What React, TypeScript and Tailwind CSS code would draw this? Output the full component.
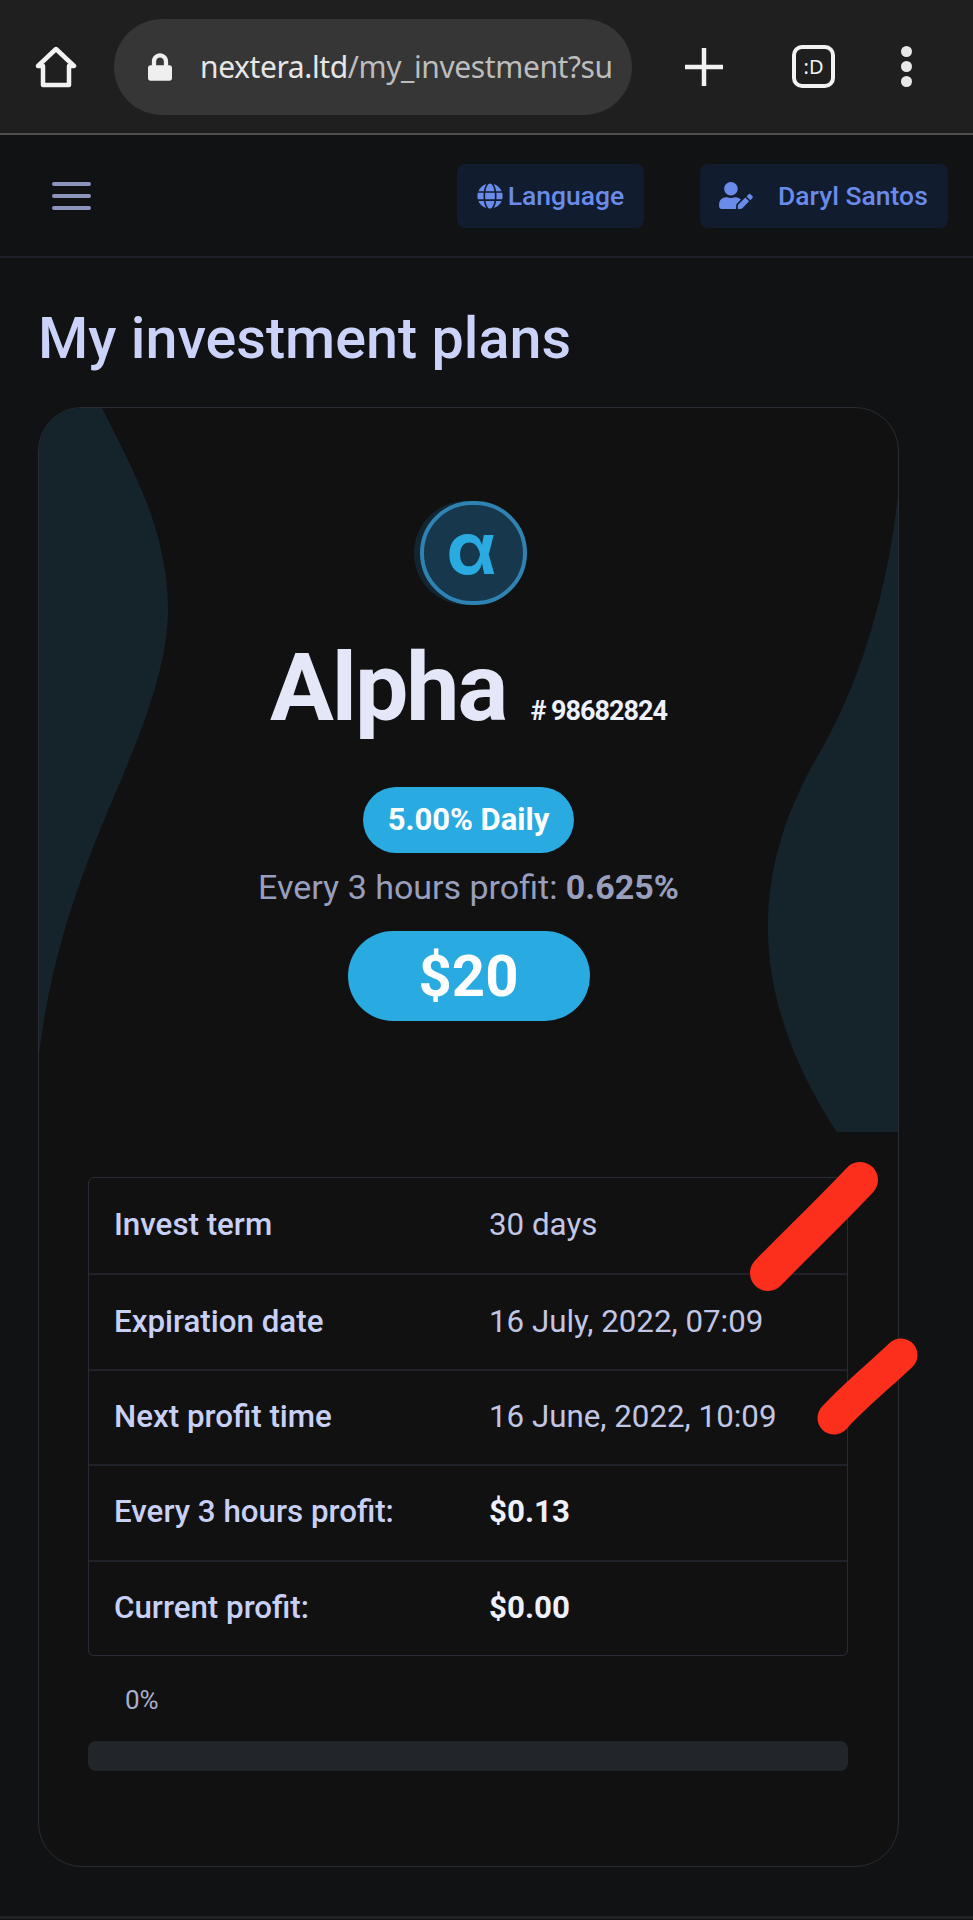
import { FaGlobe, FaUserEdit, FaLock } from 'react-icons/fa';

const rows = [
    { label: 'Invest term', value: '30 days' },
    { label: 'Expiration date', value: '16 July, 2022, 07:09' },
    { label: 'Next profit time', value: '16 June, 2022, 10:09' },
    { label: 'Every 3 hours profit:', value: '$0.13', strong: true },
    { label: 'Current profit:', value: '$0.00', strong: true },
];

const BrowserBar = () => (
    <div className="h-[135px] flex items-center bg-[#1f1f1f] border-b-2 border-[#4f4f4f]">
        <svg className="ml-[35px] w-[42px] h-[42px]" viewBox="0 0 42 42" fill="none" stroke="#f2f2f2" strokeWidth="4.5" strokeLinejoin="round">
            <path d="M21 3 L39 20 H34 V39 H8 V20 H3 Z" />
        </svg>
        <div className="ml-[37px] w-[518px] h-[96px] rounded-[48px] bg-[#363636] flex items-center pl-[34px] overflow-hidden">
            <FaLock className="text-[#efefef] w-[24px] h-[28px] shrink-0" />
            <div className="ml-[28px] w-[414px] overflow-hidden whitespace-nowrap font-['Noto_Sans',sans-serif] text-[30px] tracking-[-0.4px] text-[#bdbdbd]">
                <span className="text-[#e6e6e6]">nextera.ltd</span>/my_investment?su
            </div>
        </div>
        <svg className="ml-[52px] w-[40px] h-[40px]" viewBox="0 0 40 40" stroke="#f2f2f2" strokeWidth="4.5">
            <path d="M20 1 V39 M1 20 H39" />
        </svg>
        <div className="ml-[68px] w-[43px] h-[43px] rounded-[10px] border-[4px] border-[#f2f2f2] flex items-center justify-center font-['Noto_Sans',sans-serif] text-[20px] text-[#f2f2f2]">
            :D
        </div>
        <div className="ml-[66px] flex flex-col gap-[4px]">
            <div className="w-[11px] h-[11px] rounded-full bg-[#e8e8e8]" />
            <div className="w-[11px] h-[11px] rounded-full bg-[#e8e8e8]" />
            <div className="w-[11px] h-[11px] rounded-full bg-[#e8e8e8]" />
        </div>
    </div>
);

const NavBar = () => (
    <div className="h-[123px] flex items-center border-b-2 border-[#1e2029] pl-[52px] pr-[25px]">
        <div className="flex flex-col gap-[8px]">
            <div className="w-[39px] h-[4px] rounded-sm bg-[#8c95b8]" />
            <div className="w-[39px] h-[4px] rounded-sm bg-[#8c95b8]" />
            <div className="w-[39px] h-[4px] rounded-sm bg-[#8c95b8]" />
        </div>
        <div className="ml-auto w-[187px] h-[64px] rounded-lg bg-[#111c2e] flex items-center justify-center gap-[5px] text-[26.5px] font-medium text-[#6a8bea]">
            <FaGlobe className="w-[26px] h-[26px]" />
            Language
        </div>
        <div className="ml-[56px] w-[248px] h-[64px] rounded-lg bg-[#111c2e] flex items-center pl-[19px] text-[26.5px] font-medium text-[#6a8bea]">
            <FaUserEdit className="w-[34px] h-[27px]" />
            <span className="ml-[25px]">Daryl Santos</span>
        </div>
    </div>
);

const App = () => {
    return (
        <div className="relative w-[973px] h-[1920px] overflow-hidden bg-[#111214] font-['Roboto',sans-serif]">
            <BrowserBar />
            <NavBar />

            <main className="pl-[38px]">
                <h1 className="mt-[48px] text-[57.5px] leading-[66px] font-medium text-[#ccd3fa]">My investment plans</h1>

                {/* Plan card */}
                <div className="relative mt-[35px] w-[861px] h-[1460px] rounded-[44px] border border-[#2a2c35] overflow-hidden bg-[#111112]">
                    <svg className="absolute left-0 top-0 w-[860px] h-[1460px]" viewBox="0 0 860 1460" fill="#15242b">
                        <path d="M0 0 H63 C90 55 129 120 129 201 C129 280 80 370 50 450 C25 515 8 580 0 646 Z" />
                        <path d="M860 75 C850 190 815 290 774 356 C745 410 729 460 729 521 C729 600 765 675 798 724 H860 Z" />
                    </svg>

                    <div className="relative flex flex-col items-center pt-[93px]">
                        <div className="relative w-[107px] h-[104px] ml-[10px] rounded-full bg-[#17374c] border-[4px] border-[#2f83b2] flex items-center justify-center font-['Inter',sans-serif] text-[72px] leading-none font-bold text-[#29abe2] shadow-[-6px_0_0_#132530]">
                            <span className="-mt-[10px] -ml-[4px]">α</span>
                        </div>

                        <div className="mt-[24px] h-[118px] flex items-baseline">
                            <span className="text-[95px] leading-[118px] font-bold text-[#e4e7f8] tracking-[-2px]">Alpha</span>
                            <span className="ml-[24px] text-[27px] font-bold text-[#eef0fb] tracking-[-1px]"># 98682824</span>
                        </div>

                        <div className="mt-[40px] h-[66px] w-[211px] rounded-full bg-[#29abe2] flex items-center justify-center text-[31px] font-bold text-white">
                            5.00% Daily
                        </div>
                        <div className="mt-[14px] text-[34px] leading-[40px] text-[#989fbd]">
                            Every 3 hours profit: <span className="font-bold">0.625%</span>
                        </div>
                        <div className="mt-[24px] h-[90px] w-[242px] rounded-full bg-[#29abe2] flex items-center justify-center text-[58px] font-bold text-white">
                            $20
                        </div>
                    </div>

                    {/* Details table */}
                    <div className="relative ml-[49px] mr-[50px] mt-[156px] rounded-md border border-[#2a2c35]">
                        {rows.map((row, i) => (
                            <div
                                key={row.label}
                                className={`h-[95.4px] flex items-center pl-[25px] text-[31.3px] ${i > 0 ? 'border-t-2 border-[#20222a]' : ''}`}
                            >
                                <div className="w-[375px] font-medium text-[#c9d0f5]">{row.label}</div>
                                <div className={row.strong ? 'font-bold text-[#eef0fb]' : 'text-[#c0c6e4]'}>{row.value}</div>
                            </div>
                        ))}
                    </div>

                    <div className="relative ml-[49px] mt-[28px] pl-[37px] text-[26px] leading-[32px] text-[#a9afc9]">0%</div>
                    <div className="relative ml-[49px] mr-[50px] mt-[25px] h-[30px] rounded-lg bg-[#22252a]" />
                </div>
            </main>

            <div className="mt-[49px] h-[3px] bg-[#222222]" />

            {/* Red scribbles drawn over the screenshot */}
            <svg className="absolute left-0 top-0 w-[973px] h-[1920px] pointer-events-none" viewBox="0 0 973 1920" fill="none" stroke="#fb2f1c" strokeLinecap="round">
                <path d="M768 1273 C800 1240 830 1212 860 1180" strokeWidth="36" />
                <path d="M834 1418 C855 1395 880 1375 901 1355" strokeWidth="33" />
            </svg>
        </div>
    );
};

export default App;
